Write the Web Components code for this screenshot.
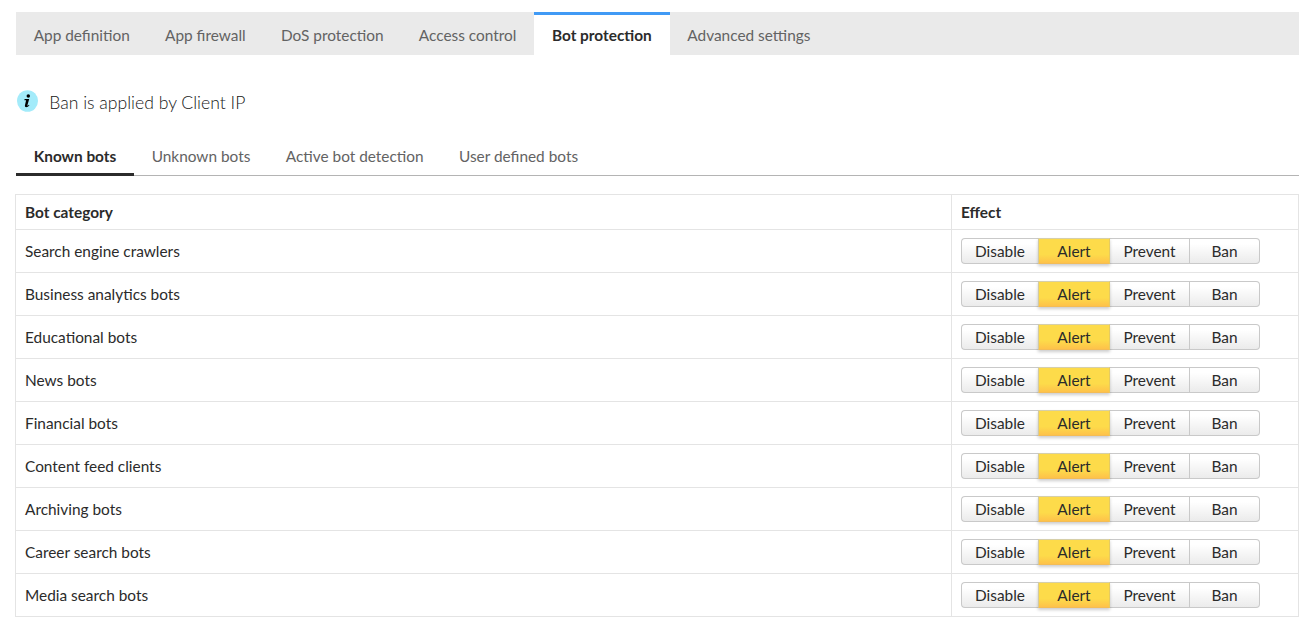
<!DOCTYPE html>
<html lang="en">
<head>
<meta charset="utf-8">
<title>Bot protection</title>
<style>
body{margin:0;background:#fff;color:#2b2b2b;font:15.4px/20px Lato,"Open Sans",sans-serif;height:625px;overflow:hidden}
</style>
</head>
<body>
<bot-page></bot-page>
<script>
function define(name, html) {
  customElements.define(name, class extends HTMLElement {
    constructor() {
      super();
      this.attachShadow({mode: 'open'}).innerHTML = html;
    }
  });
}

define('main-tab', `<style>
:host{display:block;box-sizing:border-box;height:43px;padding:13px 17.64px 0;color:#636363;white-space:nowrap;flex:none}
:host([active]){background:#fff;color:#2b2b2b;font-weight:700;border-top:3px solid #409af5;padding:10px 17.9px 0}
</style><slot></slot>`);

define('main-tabs', `<style>
:host{display:flex;background:#eaeaea;height:43px}
</style><slot></slot>`);

define('sub-tab', `<style>
:host{display:block;box-sizing:border-box;height:36px;padding:6px 17.68px 0;color:#636363;white-space:nowrap;flex:none}
:host([active]){color:#2b2b2b;font-weight:700;border-bottom:3px solid #2b2b2b}
</style><slot></slot>`);

define('sub-tabs', `<style>
:host{display:flex;height:36px;box-sizing:border-box;border-bottom:1px solid #b4b4b4}
</style><slot></slot>`);

define('info-note', `<style>
:host{display:flex;align-items:flex-start;height:24px;gap:11.2px;padding-left:1px;font-size:17.6px;font-weight:300;color:#161616}
svg{display:block;width:21px;height:22px;flex:none}
span{padding-top:3px;line-height:20px}
</style><svg viewBox="0 0 21 22"><ellipse cx="10.5" cy="11" rx="10.5" ry="10.8" fill="#a3ebfa"/><circle cx="11.3" cy="6" r="1.75"/><path d="M7.6 9h4.6l-1.8 6.3c-.1.6.5.5 1.5-.5l.5.5c-1.5 2.1-4.8 2.8-4.5.3L9.1 10.200H7.400z"/></svg><span><slot></slot></span>`);

define('effect-switch', `<style>
:host{display:grid;grid-template-columns:77px 72px 80px 70px;width:299px;height:26px}
button{all:unset;box-sizing:border-box;height:26px;text-align:center;border:1px solid #c9c9c9;border-left-width:0;background:linear-gradient(#fff 20%,#ebebeb);line-height:25px}
button:first-of-type{border-left-width:1px;border-right:0;border-radius:4px 0 0 4px}
button:last-of-type{border-radius:0 4px 4px 0}
.on{position:relative;background:linear-gradient(#fddb4a 65%,#fec24a);border:1px solid;border-color:#d6cfa9 #e6cb60 #f3bc55 #d2c9a0;box-shadow:0 2px 3px #0003}
</style><button>Disable</button><button class="on">Alert</button><button>Prevent</button><button>Ban</button>`);

define('bot-row', `<style>
:host{display:grid;grid-template-columns:936px 1fr;height:42px;border-bottom:1px solid #e4e4e4}
:host([head]){height:34px;font-weight:700}
div{display:flex;align-items:center;padding:0 9px;box-sizing:border-box}
.name{border-right:1px solid #e4e4e4}
</style><div class="name"><slot></slot></div><div><slot name="effect"></slot></div>`);

define('bot-table', `<style>
:host{display:block;border:1px solid #e4e4e4;border-bottom:0;margin-left:-1px;margin-top:18px}
</style><slot></slot>`);

const categories = ['Search engine crawlers', 'Business analytics bots', 'Educational bots', 'News bots', 'Financial bots', 'Content feed clients', 'Archiving bots', 'Career search bots', 'Media search bots'];
define('bot-page', `<style>
:host{display:block;padding:12px 13px 0 16px}
info-note{margin:35px 0 26px}
</style>
<main-tabs><main-tab>App definition</main-tab><main-tab>App firewall</main-tab><main-tab>DoS protection</main-tab><main-tab>Access control</main-tab><main-tab active>Bot protection</main-tab><main-tab>Advanced settings</main-tab></main-tabs>
<info-note>Ban is applied by Client IP</info-note>
<sub-tabs><sub-tab active>Known bots</sub-tab><sub-tab>Unknown bots</sub-tab><sub-tab>Active bot detection</sub-tab><sub-tab>User defined bots</sub-tab></sub-tabs>
<bot-table><bot-row head>Bot category<span slot="effect">Effect</span></bot-row>${categories.map(c => `<bot-row>${c}<effect-switch slot="effect"></effect-switch></bot-row>`).join('')}</bot-table>`);
</script>
</body>
</html>
